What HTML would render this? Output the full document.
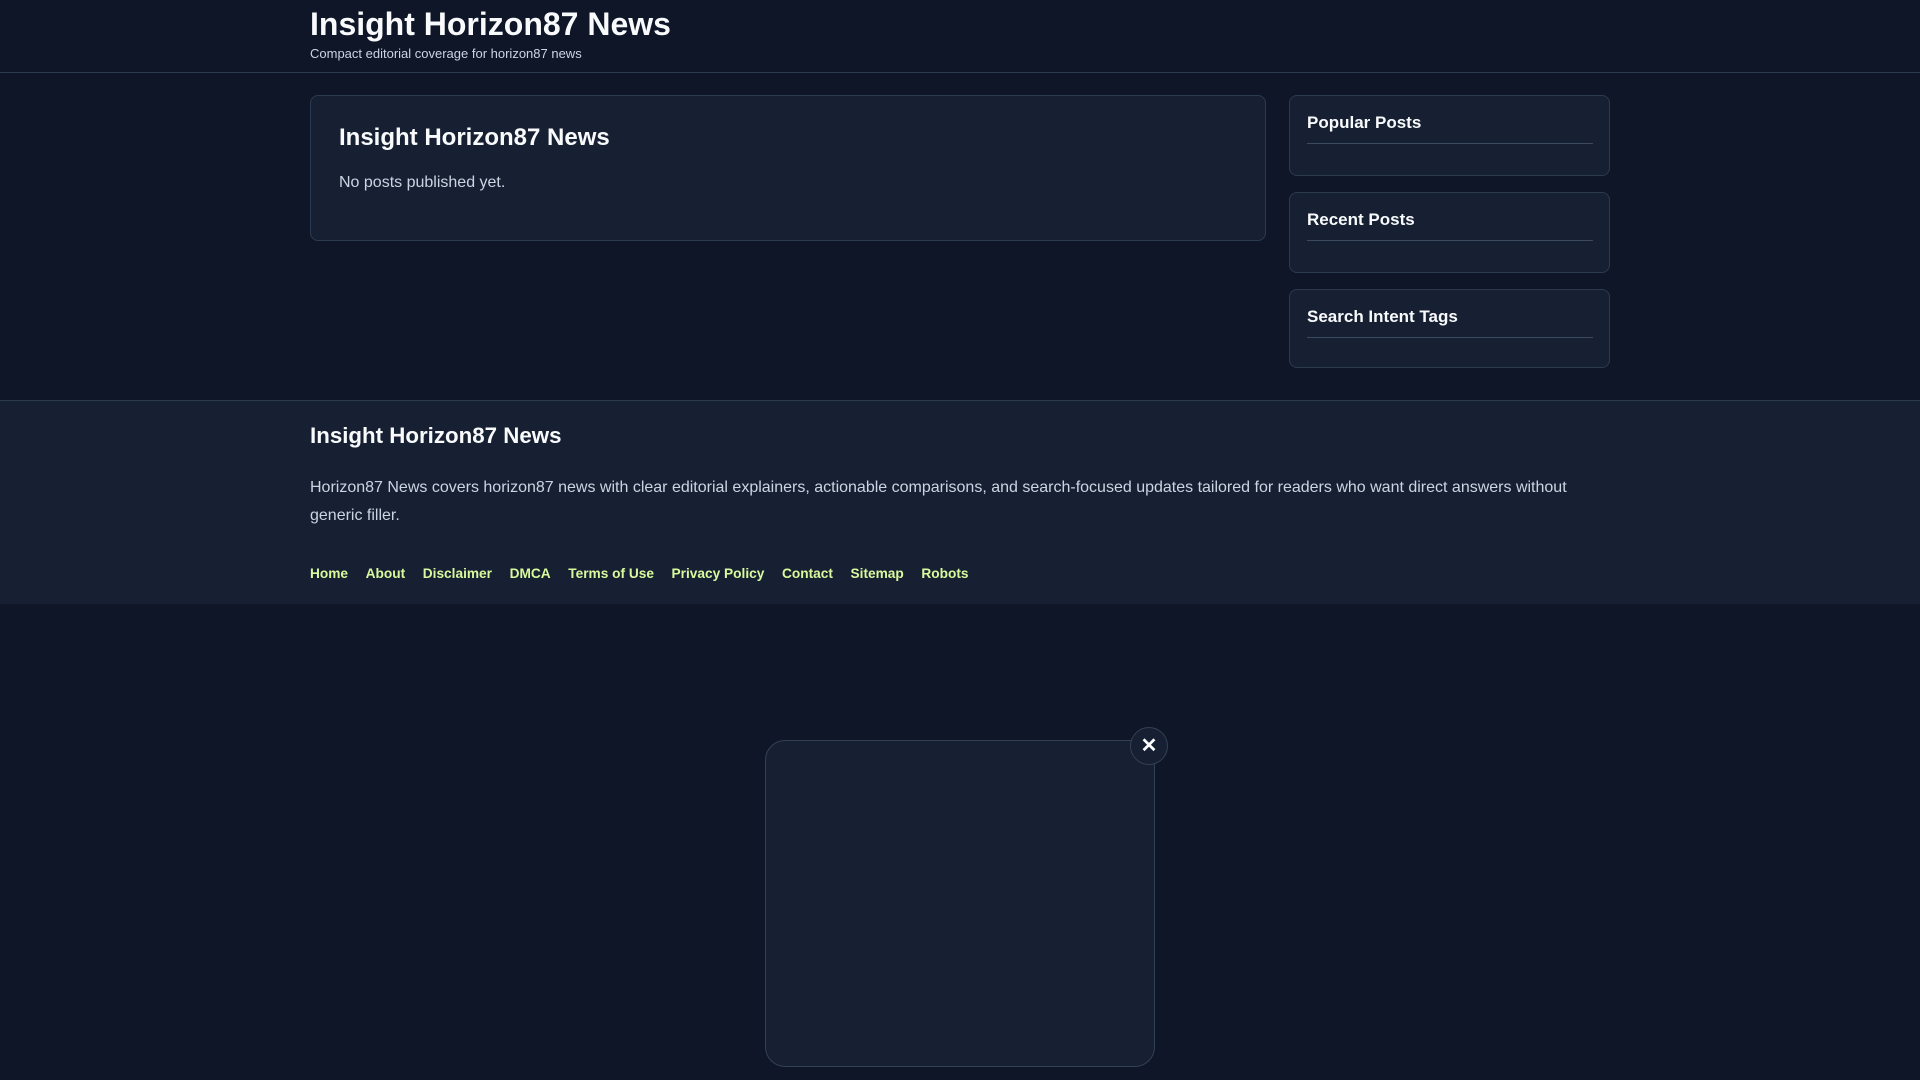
<!DOCTYPE html>
<html><head><meta charset="utf-8"><style>
*{box-sizing:border-box;margin:0;padding:0}
body{width:1920px;height:1080px;overflow:hidden;background:#0e1628;font-family:"Liberation Sans",sans-serif;color:#e2e8f0;position:relative}
.hdr{height:73px;border-bottom:1px solid #2c3a4f;padding-left:310px}
.hdr h1{font-size:32px;font-weight:bold;color:#f8fafc;padding-top:6px;line-height:36px}
.hdr p{font-size:13px;color:#cbd5e1;margin-top:4px}
.card{position:absolute;background:#172033;border:1px solid #2c3a4f;border-radius:8px}
.main{left:310px;top:95px;width:956px;height:146px;padding:28px 28px}
.main h2{font-size:24px;color:#f8fafc;line-height:28px}
.main p{font-size:16px;color:#cbd5e1;margin-top:22px}
.w{left:1289px;width:321px;padding:17px 16px 0 17px}
.w h3{font-size:17px;color:#f8fafc;line-height:20px;padding-bottom:10px;border-bottom:1px solid #3b4a60}
.foot{position:absolute;left:0;top:400px;width:1920px;height:204px;background:#172033;border-top:1px solid #2c3a4f;padding-left:310px}
.foot h2{font-size:22.3px;color:#f8fafc;margin-top:22px;line-height:26px}
.foot p{font-size:16px;color:#cbd5e1;line-height:28px;margin-top:25px;width:1300px}
.links{margin-top:36px;font-size:13.7px;font-weight:bold}
.links a{color:#d9f99d;text-decoration:none;margin-right:17.6px}
.pop{position:absolute;left:765px;top:740px;width:390px;height:327px;background:#172033;border:1px solid #334155;border-radius:20px}
.x{position:absolute;left:1130px;top:727px;width:38px;height:38px;border-radius:50%;background:#172033;border:1px solid #334155;color:#fff;font-size:20px;font-weight:bold;text-align:center;line-height:36px}
</style></head><body>
<div class="hdr"><h1>Insight Horizon87 News</h1><p>Compact editorial coverage for horizon87 news</p></div>
<div class="card main"><h2>Insight Horizon87 News</h2><p>No posts published yet.</p></div>
<div class="card w" style="top:95px;height:81px"><h3>Popular Posts</h3></div>
<div class="card w" style="top:192px;height:81px"><h3>Recent Posts</h3></div>
<div class="card w" style="top:289px;height:79px"><h3>Search Intent Tags</h3></div>
<div class="foot"><h2>Insight Horizon87 News</h2><p>Horizon87 News covers horizon87 news with clear editorial explainers, actionable comparisons, and search-focused updates tailored for readers who want direct answers without generic filler.</p>
<div class="links"><a>Home</a><a>About</a><a>Disclaimer</a><a>DMCA</a><a>Terms of Use</a><a>Privacy Policy</a><a>Contact</a><a>Sitemap</a><a>Robots</a></div></div>
<div class="pop"></div>
<div class="x">✕</div>
</body></html>
